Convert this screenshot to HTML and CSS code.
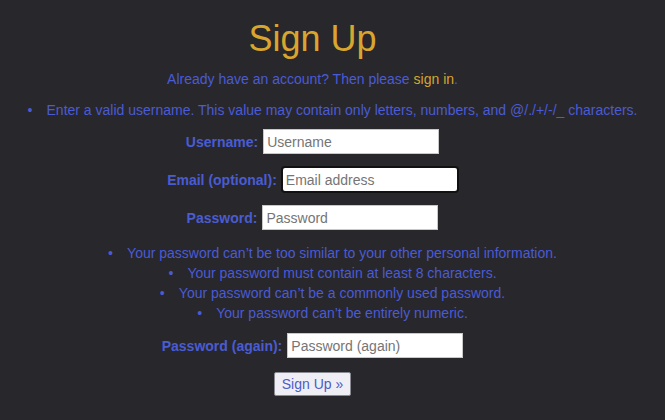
FILE: index.html
```html
<!DOCTYPE html>
<html lang="en">
<head>
<meta charset="utf-8">
<title>Sign Up</title>
<link rel="stylesheet" href="styles.css">
</head>
<body>
<main class="page">
  <header class="head">
    <h1 class="title">Sign Up</h1>
    <p class="already">Already have an account? Then please <a class="signin" href="#">sign in</a>.</p>
  </header>
  <form class="form">
    <ul class="errors">
      <li>Enter a valid username. This value may contain only letters, numbers, and @/./+/-/_ characters.</li>
    </ul>
    <div class="field first">
      <label class="label" for="username">Username:</label>
      <input class="input" id="username" type="text" placeholder="Username">
    </div>
    <div class="field">
      <label class="label" for="email">Email (optional):</label>
      <input class="input focused" id="email" type="email" placeholder="Email address">
    </div>
    <div class="field">
      <label class="label" for="password1">Password:</label>
      <input class="input" id="password1" type="password" placeholder="Password">
    </div>
    <ul class="help">
      <li>Your password can’t be too similar to your other personal information.</li>
      <li>Your password must contain at least 8 characters.</li>
      <li>Your password can’t be a commonly used password.</li>
      <li>Your password can’t be entirely numeric.</li>
    </ul>
    <div class="field again">
      <label class="label" for="password2">Password (again):</label>
      <input class="input" id="password2" type="password" placeholder="Password (again)">
    </div>
    <div class="actions">
      <button class="button" type="submit">Sign Up »</button>
    </div>
  </form>
</main>
</body>
</html>
```
FILE: styles.css
```css
html, body {
  margin: 0;
  padding: 0;
  background: #28272b;
}

body {
  font-family: "Liberation Sans", Arial, sans-serif;
  font-size: 14px;
  color: #4b5bd4;
}

.page {
  text-align: center;
  overflow: hidden;
  height: 420px;
}

.head,
.field,
.actions {
  padding-right: 40px;
}

.title {
  margin: 19px 0 0;
  font-size: 36px;
  line-height: 40px;
  font-weight: normal;
  color: #d8a52e;
}

.already {
  margin: 12px 0 0;
  line-height: 16px;
}

.signin {
  color: #d8a52e;
  text-decoration: none;
}

.form {
  margin: 0;
}

.errors,
.help {
  list-style: none;
  margin: 0;
  padding: 0;
  line-height: 20px;
}

.errors {
  margin-top: 13px;
}

.help {
  margin-top: 13px;
}

.errors li::before,
.help li::before {
  content: "•";
  display: inline-block;
  width: 19px;
  text-align: left;
}

.field {
  display: flex;
  justify-content: center;
  align-items: center;
  gap: 5px;
  margin-top: 13px;
}

.field.first {
  margin-top: 9px;
}

.field.again {
  margin-top: 10px;
}

.label {
  font-weight: bold;
  color: #4a5cd2;
}

.input {
  box-sizing: border-box;
  width: 176px;
  height: 25px;
  margin: 0;
  padding: 1px 3px;
  border: 1px solid #c8c8c8;
  background: #fff;
  font-family: "Liberation Sans", Arial, sans-serif;
  font-size: 14px;
  color: #222;
}

.input::placeholder {
  color: #757575;
}

.input.focused {
  border: 1px solid #fff;
  border-radius: 3px;
  outline: 2px solid #111;
  outline-offset: -1px;
}

.actions {
  margin-top: 14px;
}

.button {
  box-sizing: border-box;
  height: 24px;
  padding: 0 7px;
  margin: 0;
  border: 1px solid #8a8a92;
  border-radius: 2px;
  background: #eeeef4;
  font-family: "Liberation Sans", Arial, sans-serif;
  font-size: 14px;
  color: #4c5cc8;
}
```
